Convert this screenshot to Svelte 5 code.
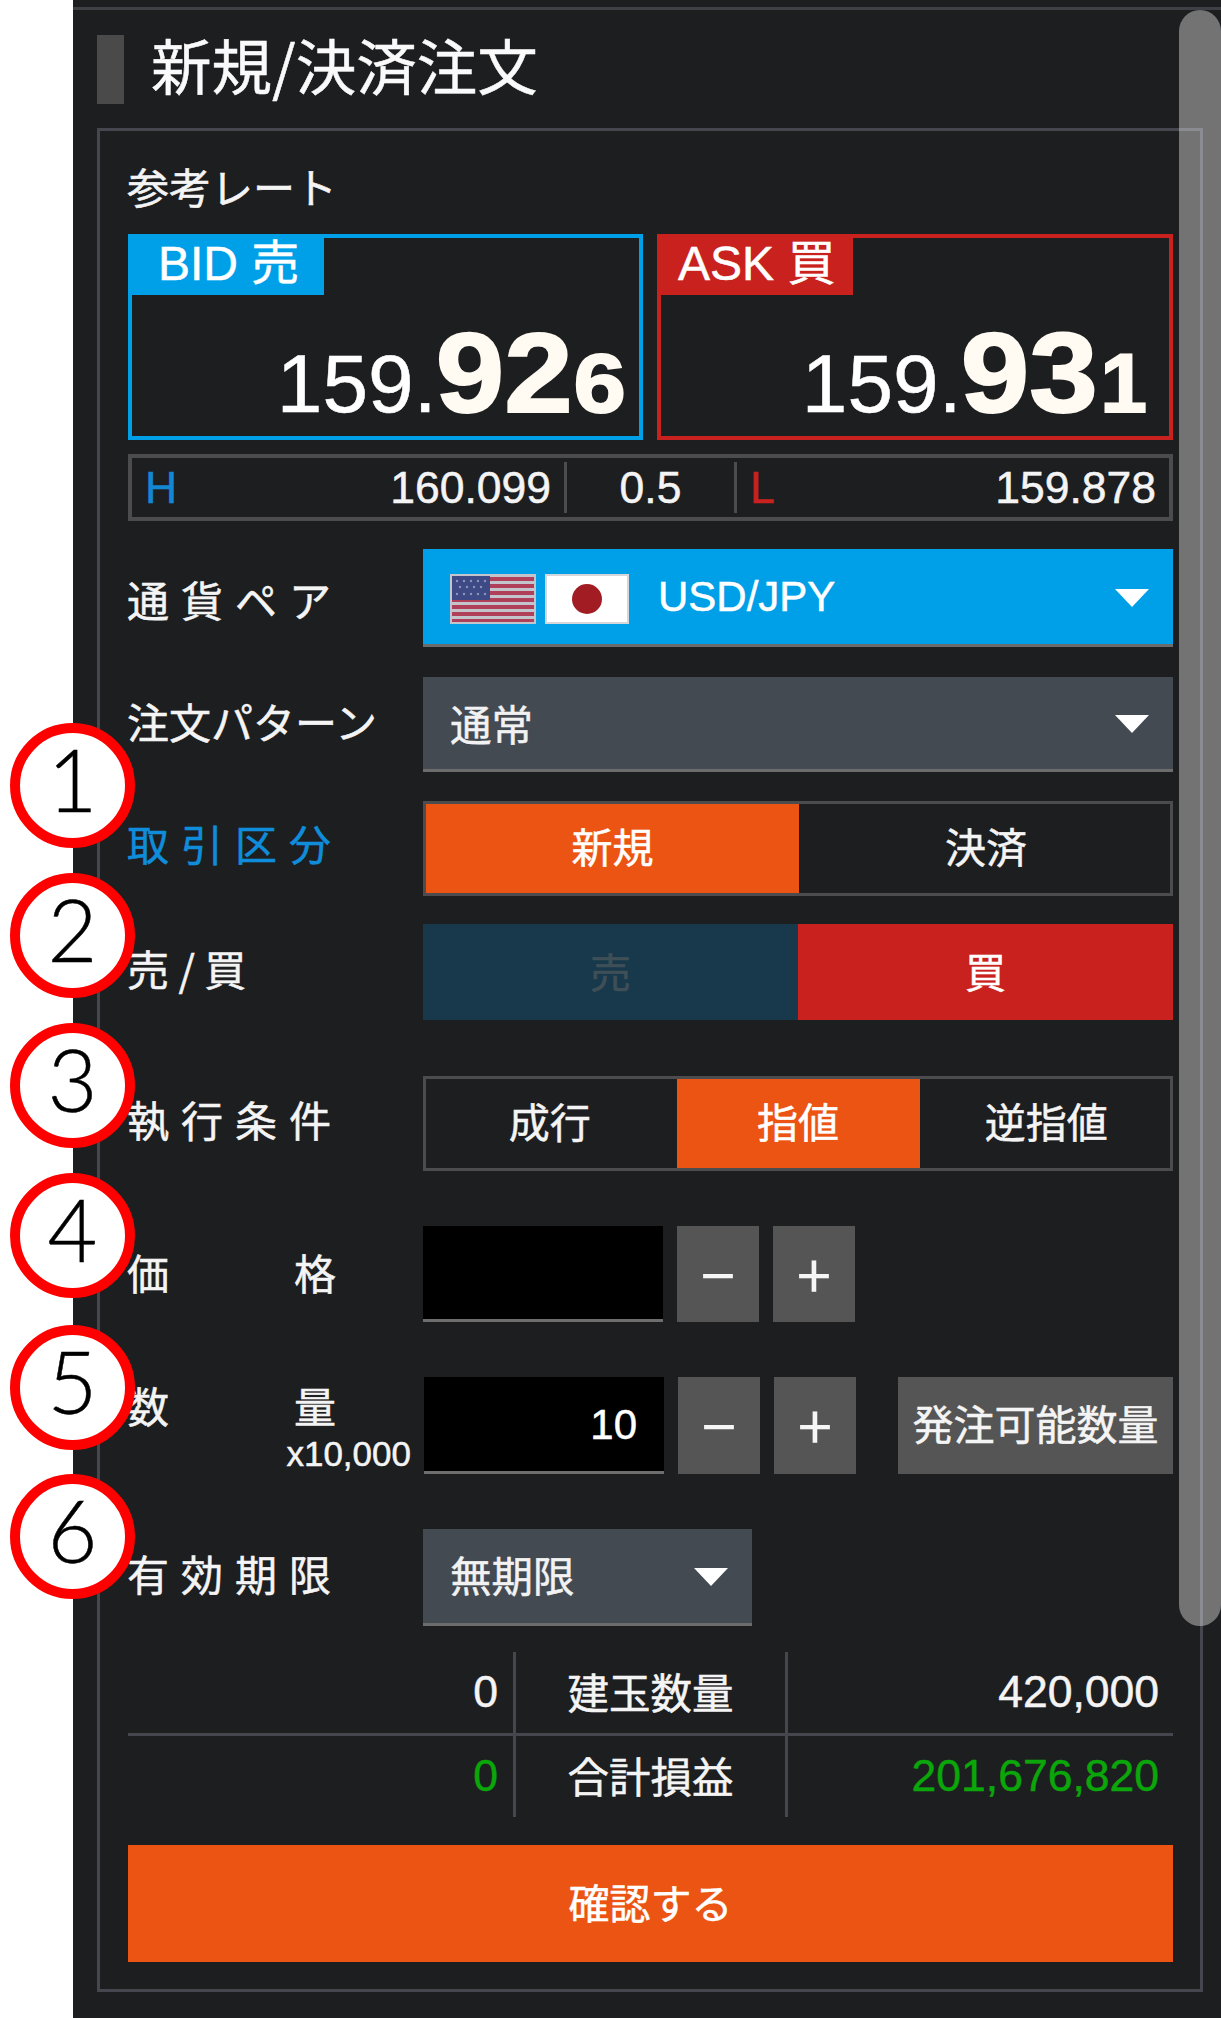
<script>
  const notes = [
    { n: 1, top: 723 },
    { n: 2, top: 873 },
    { n: 3, top: 1023 },
    { n: 4, top: 1173 },
    { n: 5, top: 1325 },
    { n: 6, top: 1474 }
  ];
</script>

<div class="page">
  <main class="panel">
    <header class="head">
      <span class="bar"></span>
      <h1>新規/決済注文</h1>
    </header>

    <section class="box">
      <div class="caption">参考レート</div>

      <div class="rates">
        <div class="rate bid">
          <div class="tag">BID 売</div>
          <div class="price"><span class="p1">159.</span><span class="p2">92</span><span class="p3">6</span></div>
        </div>
        <div class="rate ask">
          <div class="tag">ASK 買</div>
          <div class="price"><span class="p1">159.</span><span class="p2">93</span><span class="p3">1</span></div>
        </div>
      </div>

      <div class="hl">
        <div class="hl-cell high"><b>H</b><span>160.099</span></div>
        <div class="hl-mid">0.5</div>
        <div class="hl-cell low"><b>L</b><span>159.878</span></div>
      </div>

      <div class="row currency">
        <div class="label sp">通貨ペア</div>
        <div class="select blue">
          <svg class="flag" viewBox="0 0 86 50" aria-hidden="true">
            <rect width="86" height="50" fill="#c4c4cc"/>
            <g fill="#b0405a">
              <rect x="2" y="3" width="82" height="4"/>
              <rect x="2" y="10" width="82" height="4"/>
              <rect x="2" y="17" width="82" height="4"/>
              <rect x="2" y="24" width="82" height="4"/>
              <rect x="2" y="31" width="82" height="4"/>
              <rect x="2" y="38" width="82" height="4"/>
              <rect x="2" y="45" width="82" height="3"/>
            </g>
            <rect x="2" y="2" width="38" height="24" fill="#3d4a86"/>
            <g fill="#8d94ba">
              <circle cx="7" cy="7" r="1.2"/><circle cx="14" cy="7" r="1.2"/><circle cx="21" cy="7" r="1.2"/><circle cx="28" cy="7" r="1.2"/><circle cx="35" cy="7" r="1.2"/>
              <circle cx="10" cy="13" r="1.2"/><circle cx="17" cy="13" r="1.2"/><circle cx="24" cy="13" r="1.2"/><circle cx="31" cy="13" r="1.2"/>
              <circle cx="7" cy="20" r="1.2"/><circle cx="14" cy="20" r="1.2"/><circle cx="21" cy="20" r="1.2"/><circle cx="28" cy="20" r="1.2"/><circle cx="35" cy="20" r="1.2"/>
            </g>
          </svg>
          <svg class="flag jp" viewBox="0 0 84 50" aria-hidden="true">
            <rect width="84" height="50" fill="#d4d6da"/>
            <rect x="2" y="2" width="80" height="46" fill="#fff"/>
            <circle cx="42" cy="25" r="15" fill="#a21d23"/>
          </svg>
          <span class="pair">USD/JPY</span>
          <svg class="arrow" viewBox="0 0 34 18" aria-hidden="true"><path d="M0 0H34L17 18Z" fill="#fff"/></svg>
        </div>
      </div>

      <div class="row pattern">
        <div class="label">注文パターン</div>
        <div class="select gray">
          <span>通常</span>
          <svg class="arrow" viewBox="0 0 34 18" aria-hidden="true"><path d="M0 0H34L17 18Z" fill="#fff"/></svg>
        </div>
      </div>

      <div class="row trade">
        <div class="label sp accent">取引区分</div>
        <div class="seg">
          <div class="cell on">新規</div>
          <div class="cell">決済</div>
        </div>
      </div>

      <div class="row side">
        <div class="label">売 / 買</div>
        <div class="sides">
          <div class="sell">売</div>
          <div class="buy">買</div>
        </div>
      </div>

      <div class="row exec">
        <div class="label sp">執行条件</div>
        <div class="seg">
          <div class="cell">成行</div>
          <div class="cell on">指値</div>
          <div class="cell">逆指値</div>
        </div>
      </div>

      <div class="row num">
        <div class="label two"><span>価</span><span>格</span></div>
        <div class="field"></div>
        <div class="step">−</div>
        <div class="step">+</div>
      </div>

      <div class="row num qty">
        <div class="label-stack">
          <div class="label two"><span>数</span><span>量</span></div>
          <div class="unit">x10,000</div>
        </div>
        <div class="field">10</div>
        <div class="step">−</div>
        <div class="step">+</div>
        <div class="avail">発注可能数量</div>
      </div>

      <div class="row expire">
        <div class="label sp">有効期限</div>
        <div class="select gray short">
          <span>無期限</span>
          <svg class="arrow" viewBox="0 0 34 18" aria-hidden="true"><path d="M0 0H34L17 18Z" fill="#fff"/></svg>
        </div>
      </div>

      <div class="stats">
        <div class="stat">
          <div class="v1">0</div>
          <div class="v2">建玉数量</div>
          <div class="v3">420,000</div>
        </div>
        <div class="stat last">
          <div class="v1 green">0</div>
          <div class="v2">合計損益</div>
          <div class="v3 green">201,676,820</div>
        </div>
      </div>

      <button class="confirm">確認する</button>
    </section>

    <div class="scroll"></div>
  </main>

  {#each notes as note}
    <div class="note" style="top: {note.top}px">{note.n}</div>
  {/each}
</div>

<style>
  :global(body) {
    margin: 0;
    background: #fff;
  }
  .page {
    position: relative;
    width: 1221px;
    height: 2018px;
    overflow: hidden;
    background: #fff;
    font-family: "Noto Sans CJK JP", "Liberation Sans", sans-serif;
    color: #f4f4f4;
    -webkit-text-stroke: 0.5px currentColor;
  }
  .panel {
    position: relative;
    margin-left: 73px;
    height: 2018px;
    box-sizing: border-box;
    padding: 7px 18px 0 0;
    background: #1d1e20;
  }
  .head {
    display: flex;
    align-items: center;
    gap: 27px;
    height: 121px;
    margin-right: -18px;
    padding: 0 0 2px 24px;
    box-sizing: border-box;
    border-top: 3px solid #3f4046;
  }
  .bar {
    width: 27px;
    height: 69px;
    margin-top: 2px;
    background: #4a4a4a;
  }
  h1 {
    margin: -8px 0 0;
    font-size: 60.5px;
    line-height: 70px;
    font-weight: 400;
    color: #fafafa;
  }
  .box {
    margin-left: 24px;
    box-sizing: border-box;
    width: 1106px;
    height: 1864px;
    padding: 34px 27px 0 28px;
    border: 3px solid #45464e;
  }
  .caption {
    height: 42px;
    font-size: 42px;
    line-height: 42px;
    margin-left: -1px;
    white-space: nowrap;
  }
  .rates {
    display: grid;
    grid-template-columns: 515px 516px;
    gap: 14px;
    margin-top: 27px;
  }
  .rate {
    box-sizing: border-box;
    height: 206px;
    border: 4px solid;
    display: flex;
    flex-direction: column;
    justify-content: space-between;
  }
  .bid { border-color: #00a0e9; }
  .ask { border-color: #c9211e; }
  .tag {
    margin: -4px 0 0 -4px;
    height: 61px;
    width: 196px;
    box-sizing: border-box;
    padding-left: 30px;
    font-family: "Liberation Sans", "Noto Sans CJK JP", sans-serif;
    font-size: 48px;
    line-height: 60px;
    color: #fff;
    white-space: nowrap;
  }
  .bid .tag { background: #00a0e9; }
  .ask .tag { background: #c9211e; padding-left: 21px; }
  .price {
    font-family: "Liberation Sans", sans-serif;
    text-align: right;
    line-height: 100px;
    height: 100px;
    padding: 0 13px 13px 0;
    color: #fffaf2;
    white-space: nowrap;
  }
  .ask .price { padding-right: 22px; }
  .p1 { font-size: 82px; color: #fff; }
  .p2, .p3 {
    display: inline-block;
    font-weight: 700;
    -webkit-text-stroke: 2px currentColor;
    transform-origin: right bottom;
  }
  .p2 {
    font-size: 114px;
    margin-left: 10px;
    transform: scaleX(1.08);
  }
  .p3 {
    font-size: 84px;
    margin-left: 6px;
    transform: scaleX(1.12);
  }
  .ask .p3 {
    margin-left: 2px;
    transform: none;
  }
  .hl {
    display: grid;
    grid-template-columns: 432px 173px 1fr;
    align-items: center;
    box-sizing: border-box;
    height: 67px;
    margin-top: 14px;
    border: 4px solid #4c4c4e;
    font-family: "Liberation Sans", sans-serif;
    font-size: 44.5px;
    line-height: 51px;
  }
  .hl-cell {
    display: flex;
    justify-content: space-between;
    padding: 0 13px;
    height: 51px;
  }
  .hl-cell b { font-weight: 400; }
  .high b { color: #1487d2; }
  .low b { color: #c9211e; }
  .hl-mid {
    height: 51px;
    text-align: center;
    border-left: 3px solid #4c4c4e;
    border-right: 3px solid #4c4c4e;
  }
  .row {
    display: flex;
    align-items: center;
  }
  .label {
    width: 296px;
    flex: none;
    box-sizing: border-box;
    margin-left: -1px;
    padding-bottom: 4px;
    font-size: 42px;
    line-height: 50px;
    white-space: nowrap;
  }
  .currency .label { padding: 1px 0 0; }
  .pattern .label { padding-bottom: 7px; }
  .trade .label { padding-bottom: 12px; }
  .side .label, .exec .label, .expire .label { padding-bottom: 9px; }
  .sp { letter-spacing: 12px; }
  .accent { color: #0f8ddb; }
  .two {
    display: flex;
    justify-content: space-between;
    width: 209px;
    margin-right: 87px;
  }
  .select {
    flex: 1;
    position: relative;
    display: flex;
    align-items: center;
    box-sizing: border-box;
    height: 100%;
    padding-left: 27px;
    border-bottom: 3px solid #6c6c6c;
    font-size: 41.5px;
    color: #f2f2f2;
  }
  .blue { background: #00a0e9; }
  .gray { background: #434a52; }
  .short {
    flex: 0 0 329px;
  }
  .short span { margin-top: -4px; }
  .flag {
    width: 86px;
    height: 50px;
    margin: 5px 8px 0 0;
  }
  .pair {
    margin-left: 20px;
    font-family: "Liberation Sans", sans-serif;
    font-size: 42px;
    color: #fff;
  }
  .arrow {
    position: absolute;
    right: 24px;
    top: 50%;
    width: 34px;
    height: 18px;
    margin-top: -8px;
  }
  .currency { height: 98px; margin-top: 28px; }
  .pattern { height: 95px; margin-top: 30px; }
  .trade { height: 95px; margin-top: 29px; }
  .side { height: 96px; margin-top: 28px; }
  .exec { height: 95px; margin-top: 56px; }
  .num { height: 96px; margin-top: 55px; }
  .qty { height: 97px; }
  .expire { height: 97px; margin-top: 55px; }
  .seg {
    flex: 1;
    display: flex;
    gap: 3px;
    height: 100%;
    box-sizing: border-box;
    border: 3px solid #4c4c4e;
    font-size: 41px;
  }
  .cell {
    flex: 1;
    display: flex;
    align-items: center;
    justify-content: center;
    padding-bottom: 8px;
  }
  .on {
    background: #eb5412;
    color: #fff;
  }
  .trade .on { flex: 0 0 373px; }
  .exec .on { flex: 0 0 243px; }
  .sides {
    flex: 1;
    display: grid;
    grid-template-columns: 1fr 1fr;
    height: 100%;
    font-size: 41px;
  }
  .sell, .buy {
    display: flex;
    align-items: center;
    justify-content: center;
    padding-bottom: 4px;
  }
  .sell { background: #17394b; color: #3f4f58; }
  .buy { background: #c9211e; color: #fff; }
  .field {
    flex: none;
    width: 240px;
    height: 100%;
    box-sizing: border-box;
    padding-right: 27px;
    background: #000;
    border-bottom: 3px solid #6e6e6e;
    font-family: "Liberation Sans", sans-serif;
    font-size: 42px;
    line-height: 96px;
    text-align: right;
    color: #fff;
  }
  .step {
    flex: none;
    display: flex;
    align-items: center;
    justify-content: center;
    width: 82px;
    height: 100%;
    margin-left: 14px;
    padding-bottom: 5px;
    box-sizing: border-box;
    background: #555;
    font-size: 62px;
    line-height: 1;
    color: #f6f6f6;
    -webkit-text-stroke: 0;
  }
  .avail {
    flex: 1;
    display: flex;
    align-items: center;
    justify-content: center;
    height: 100%;
    margin-left: 42px;
    padding-bottom: 8px;
    box-sizing: border-box;
    background: #555;
    font-size: 41px;
    white-space: nowrap;
  }
  .label-stack {
    width: 296px;
    flex: none;
  }
  .label-stack .label { padding-bottom: 0; line-height: 50px; }
  .unit {
    margin-top: 7px;
    padding-right: 13px;
    text-align: right;
    font-family: "Liberation Sans", sans-serif;
    font-size: 35px;
    line-height: 34px;
  }
  .stats {
    margin-top: 26px;
    font-family: "Liberation Sans", "Noto Sans CJK JP", sans-serif;
    font-size: 44.5px;
  }
  .stat {
    display: grid;
    grid-template-columns: 385px 275px 1fr;
    align-items: stretch;
    height: 81px;
    border-bottom: 3px solid #45464e;
  }
  .stat.last { border-bottom: none; }
  .v1, .v2, .v3 {
    display: flex;
    align-items: center;
    padding-bottom: 1px;
  }
  .v1 { justify-content: flex-end; padding-right: 15px; }
  .v2 {
    justify-content: center;
    padding-bottom: 4px;
    font-family: "Noto Sans CJK JP", sans-serif;
    font-size: 41.5px;
    border-left: 3px solid #45464e;
    border-right: 3px solid #45464e;
  }
  .v3 { justify-content: flex-end; padding-right: 14px; }
  .green { color: #0aa60a; }
  .confirm {
    display: block;
    width: 100%;
    height: 117px;
    margin-top: 28px;
    padding: 0 0 6px;
    border: 0;
    background: #eb5412;
    color: #fff;
    font-family: "Noto Sans CJK JP", sans-serif;
    font-size: 41px;
    -webkit-text-stroke: 0.5px currentColor;
  }
  .scroll {
    position: absolute;
    left: 1106px;
    top: 10px;
    width: 42px;
    height: 1616px;
    border-radius: 21px;
    background: rgba(255, 255, 255, 0.38);
  }
  .note {
    position: absolute;
    left: 10px;
    width: 125px;
    height: 125px;
    box-sizing: border-box;
    border: 10px solid #f00;
    border-radius: 50%;
    background: #fff;
    color: #000;
    display: flex;
    align-items: center;
    justify-content: center;
    font-family: Lato, "Noto Sans CJK JP", sans-serif;
    font-weight: 300;
    font-size: 86px;
    line-height: 1;
    padding-bottom: 14px;
    -webkit-text-stroke: 0.5px #000;
  }
</style>
